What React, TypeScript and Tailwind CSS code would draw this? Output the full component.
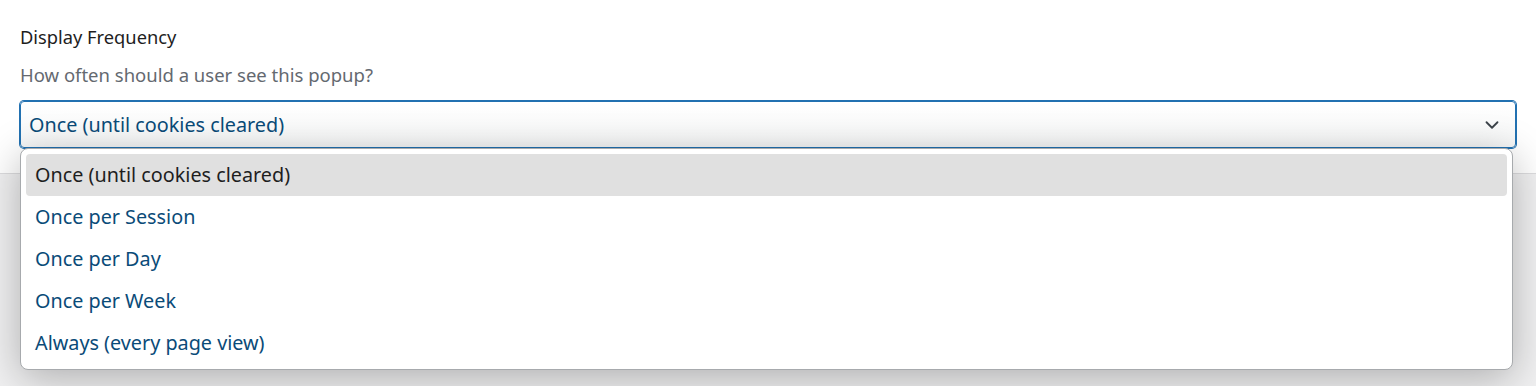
import { ChevronDown } from 'lucide-react';

const options = [
  'Once (until cookies cleared)',
  'Once per Session',
  'Once per Day',
  'Once per Week',
  'Always (every page view)',
];

export default function App() {
  const selected = options[0];

  return (
    <div className="relative h-[386px] w-full overflow-hidden bg-[#f0f0f1] font-['Noto_Sans',sans-serif]">
      {/* Field section */}
      <div className="h-[174px] border-b border-[#dcdcde] bg-white px-5 pt-[25px]">
        <div className="text-[18.3px] leading-[24px] text-[#1e1e1e]">Display Frequency</div>
        <div className="mt-[14px] text-[18.5px] leading-[24px] text-[#646970]">How often should a user see this popup?</div>

        <div className="relative mt-[14px]">
          <div className="flex h-[47px] items-center justify-between rounded-[4px] border border-[#2271b1] bg-gradient-to-b from-white to-[#f6f7f7] pl-2 pr-[12px] shadow-[0_0_0_1px_#2271b1]">
            <span className="text-[19.8px] text-[#0a4b78]">{selected}</span>
            <ChevronDown className="h-[22px] w-[22px] text-[#3c434a]" strokeWidth={2} />
          </div>

          {/* Open listbox */}
          <div className="absolute left-0 right-[3px] top-[47px] z-10 rounded-[8px] border border-[#a7aaad] bg-white p-[5px] shadow-[0_8px_40px_rgba(0,0,0,0.28)]">
            {options.map(opt => (
              <div
                key={opt}
                className={
                  opt === selected
                    ? 'flex h-[42px] items-center rounded-[4px] bg-[#e0e0e0] px-[9px] text-[19.8px] text-[#1e1e1e]'
                    : 'flex h-[42px] items-center rounded-[4px] px-[9px] text-[19.8px] text-[#0a4b78]'
                }
              >
                {opt}
              </div>
            ))}
          </div>
        </div>
      </div>
    </div>
  );
}
